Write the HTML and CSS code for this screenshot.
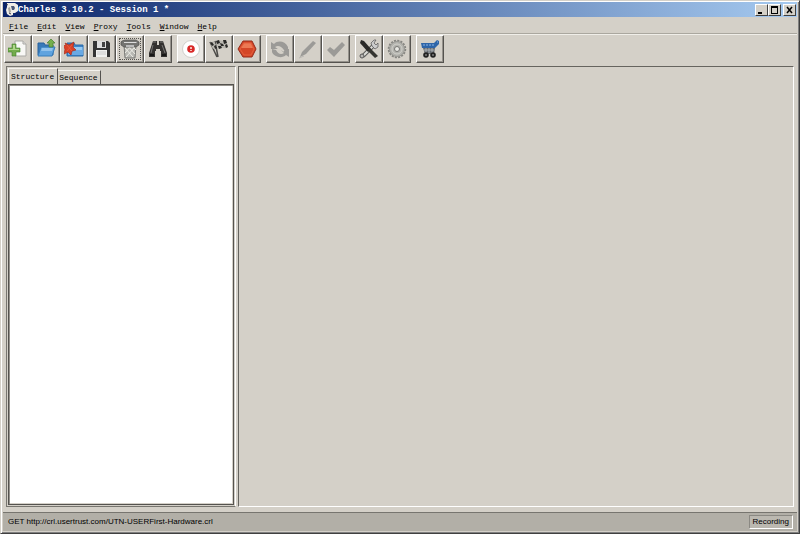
FILE: index.html
```
<!DOCTYPE html>
<html lang="en">
<head>
<meta charset="utf-8">
<title>Charles 3.10.2 - Session 1 *</title>
<link rel="stylesheet" href="styles.css">
</head>
<body>
<div class="window">
  <header class="titlebar">
    <svg class="logo" width="13" height="13" viewBox="0 0 13 13"><path d="M2 0h8l3 2v6l-3 2H8v2l-3 1-3-2-1-4 1-3z" fill="#efede7"/><path d="M6 3h3l1 2-1 2H7z" fill="#4a5878"/><path d="M3 5l2-1 1 5-2 1z" fill="#aaa9a2"/><path d="M1 1l2 1M4 10l2 1" stroke="#38384a"/></svg>
    <h1 class="title">Charles 3.10.2 - Session 1 *</h1>
    <div class="controls">
      <button class="control" aria-label="Minimize"><svg width="9" height="8" viewBox="0 0 9 8"><path d="M1 6h4v2H1z"/></svg></button>
      <button class="control" aria-label="Maximize"><svg width="9" height="8" viewBox="0 0 9 8"><path d="M1 0h7v8H1zM2 2v5h5V2z" fill-rule="evenodd"/></svg></button>
      <button class="control close" aria-label="Close"><svg width="9" height="8" viewBox="0 0 9 8"><path d="M2 1l5 6M7 1L2 7" stroke="#000" stroke-width="1.5"/></svg></button>
    </div>
  </header>
  <nav class="menubar">
    <button class="menu"><u>F</u>ile</button>
    <button class="menu"><u>E</u>dit</button>
    <button class="menu"><u>V</u>iew</button>
    <button class="menu"><u>P</u>roxy</button>
    <button class="menu"><u>T</u>ools</button>
    <button class="menu"><u>W</u>indow</button>
    <button class="menu"><u>H</u>elp</button>
  </nav>
  <div class="toolbar">
    <div class="group">
      <button class="tool" aria-label="New session"><svg class="icon" viewBox="0 0 20 20"><path d="M7 2h8l3 3v12H7z" fill="#f8f8f6" stroke="#aaa9a5"/><path d="M15 2v3h3" fill="#ddd" stroke="#aaa9a5"/><path d="M4 5h4v4h4v4H8v4H4v-4H0V9h4z" fill="#73ac4c" stroke="#42802c" stroke-width=".6"/><path d="M5 6h2v4H5zM1 10h10v1H1z" fill="#b0d68c"/></svg></button>
      <button class="tool" aria-label="Open"><svg class="icon" viewBox="0 0 20 20"><path d="M2 16V4h6l1 2h8v10z" fill="#3879b9" stroke="#28639d"/><path d="M5 8h14l-3 9H2z" fill="#5fa3df" stroke="#377cba"/><path d="M6 9h11l-1 3H5z" fill="#91c2ec"/><path d="M15 0l4 4h-2v4h-4V4h-2z" fill="#75af4d" stroke="#477c32" stroke-width=".7"/></svg></button>
      <button class="tool" aria-label="Close session"><svg class="icon" viewBox="0 0 20 20"><path d="M3 17V4h7l1 2h8v11z" fill="#3f83c7" stroke="#286ba8"/><path d="M4 8h15v8H4z" fill="#69a9e4"/><path d="M5 8h13v3H5z" fill="#97c9f0"/><path d="M1 4l4 2 5-3-1 5 3 3-4 1-1 4-3-3-4 2 1-5-2-3 3-1z" fill="#d94027" stroke="#a82c1d" stroke-width=".7"/><path d="M3 6l5 6M8 6l-5 6" stroke="#e85b3e"/></svg></button>
      <button class="tool" aria-label="Save"><svg class="icon" viewBox="0 0 20 20"><path d="M1 2h15l2 2v14H1z" fill="#343434"/><path d="M5 2h9v7H5z" fill="#dedede"/><path d="M10 3h3v5h-3z" fill="#424242"/><path d="M4 11h11v7H4z" fill="#f2f2f0"/><path d="M5 13h9M5 15h9" stroke="#ccc"/></svg></button>
      <button class="tool focused" aria-label="Clear"><svg class="icon" viewBox="0 0 20 20"><path d="M4 6h12l-1 13H5z" fill="#b8b8b3" stroke="#787875"/><path d="M5 9l8 9M8 7l7 8M12 7l4 4M15 8L6 18M11 7l-6 7" stroke="#eeeee7"/><path d="M2 2l3-1h11l3 2v3l-3 2H4L1 6V3z" fill="#747471" stroke="#50504f" stroke-width=".7"/><path d="M4 3h12l1 1H4z" fill="#ddd"/><path d="M6 6h8v2H6z" fill="#bbb"/></svg></button>
      <button class="tool" aria-label="Find"><svg class="icon" viewBox="0 0 20 20"><path d="M5 2h4v4h2V2h4l1 3 3 9v4h-6v-6h-1v-2H8v2H7v6H1v-4l3-9z" fill="#33312f"/><path d="M5 3h3M12 3h3M5 6L3 14M14 6l3 8" stroke="#777674"/><path d="M2 16h4M14 16h4" stroke="#171716" stroke-width="2"/></svg></button>
    </div>
    <div class="group">
      <button class="tool pressed" aria-label="Record"><svg class="icon" viewBox="0 0 20 20"><circle cx="10" cy="10" r="8.500" fill="#fff" stroke="#d0cfcb"/><circle cx="10" cy="10" r="3.800" fill="#d92928"/><path d="M9 8h2v2H9zM9 11h2v1H9z" fill="#f4bbb7"/></svg></button>
      <button class="tool" aria-label="Throttle"><svg class="icon" viewBox="0 0 20 20"><path d="M1 3l7 15M6 2l3 16" stroke="#4c4b48" stroke-width="1.500"/><path d="M1 4l4-2 3 6-4 2zM7 2c4-2 5 1 10-1l2 7c-4 3-6-1-10 2z" fill="#b9b7b0"/><path d="M1 4l2-1 2 3-2 1zM5 7l2-1 1 3-2 1zM7 2l3-1 1 3-3 1zM11 4l3 1 1 2-3 0zM14 1l3 0 1 3-3 1zM9 7l3 0 1 2-3 1zM16 6l2-1 1 3-2 1z" fill="#292927"/></svg></button>
      <button class="tool" aria-label="Breakpoints"><svg class="icon" viewBox="0 0 20 20"><path d="M6 2h9l4 8-4 8H6l-5-8z" fill="#d44627" stroke="#962b1a"/><path d="M7 4h7l2 5H4z" fill="#ec7954"/><path d="M7 4h7l3 6-3 6H7l-4-6z" fill="none" stroke="#e45f3d"/></svg></button>
    </div>
    <div class="group">
      <button class="tool" aria-label="Repeat" disabled><svg class="icon" viewBox="0 0 20 20"><path d="M1 10V3l3 2c4-4 11-3 14 3v4l-4-1c-3-4-6-5-9-3l3 2zM19 10v8l-3-2C12 20 4 18 2 13v-3l4 1c2 4 5 5 8 3l-3-3z" fill="#9b9a97"/><path d="M7 8l7 4" stroke="#d4d0c8" stroke-width="1.500"/></svg></button>
      <button class="tool" aria-label="Edit" disabled><svg class="icon" viewBox="0 0 20 20"><path d="M2 18l2-5L15 2l3 2L8 15z" fill="#9b9a97"/><path d="M1 19l5-2" stroke="#b9b7b2"/></svg></button>
      <button class="tool" aria-label="Validate" disabled><svg class="icon" viewBox="0 0 20 20"><path d="M1 11l3-3 4 3 8-8 3 3L8 18z" fill="#9b9a97"/></svg></button>
    </div>
    <div class="group">
      <button class="tool" aria-label="Tools"><svg class="icon" viewBox="0 0 20 20"><path d="M4 17L15 6" stroke="#5b5b58" stroke-width="4"/><path d="M4 17L15 6" stroke="#dcdcd8" stroke-width="2"/><path d="M13 7l-1-3 3-3 2 0-2 3 2 2 2-2 0 4-3 2z" fill="#ccc" stroke="#555" stroke-width=".7"/><path d="M2 1l3 1 7 8-3 3-8-9z" fill="#292927"/><path d="M11 9l8 8-3 2-7-7z" fill="#353531"/><circle cx="3" cy="17" r="2" fill="#b9b8b4" stroke="#555"/></svg></button>
      <button class="tool" aria-label="Settings"><svg class="icon" viewBox="0 0 20 20"><circle cx="10" cy="10" r="8" fill="none" stroke="#858581" stroke-width="2.500" stroke-dasharray="2 1.140"/><circle cx="10" cy="10" r="7.500" fill="#b3b3ae" stroke="#999994"/><circle cx="10" cy="10" r="5" fill="none" stroke="#d0d0ca"/><circle cx="10" cy="10" r="2.500" fill="#e8e8e3" stroke="#777774"/></svg></button>
    </div>
    <div class="group">
      <button class="tool" aria-label="Purchase"><svg class="icon" viewBox="0 0 20 20"><path d="M1 4h13l3-3 2 1v3l-4 4H2z" fill="#2e65a8"/><path d="M3 6h12M17 3h1" stroke="#88b4e6" stroke-dasharray="2 1"/><path d="M3 9h12l-1 6H5z" fill="#666b70"/><path d="M4 11h10M6 9v5M9 9v5M12 9v5" stroke="#c2c5c8" stroke-width=".7"/><circle cx="6" cy="16" r="2.800" fill="#222"/><circle cx="13" cy="16" r="2.800" fill="#222"/><path d="M5 16h2M12 16h2" stroke="#aaa"/></svg></button>
    </div>
  </div>
  <main class="workspace">
    <section class="sidebar">
      <div class="tabs" role="tablist">
        <button class="tab selected" role="tab" aria-selected="true">Structure</button>
        <button class="tab" role="tab" aria-selected="false">Sequence</button>
      </div>
      <div class="tree" role="tabpanel"></div>
    </section>
    <section class="detail"></section>
  </main>
  <footer class="statusbar">
    <span>GET http://crl.usertrust.com/UTN-USERFirst-Hardware.crl</span>
    <span class="recording">Recording</span>
  </footer>
</div>
</body>
</html>
```
FILE: styles.css
```
* { box-sizing: border-box; }

body { margin: 0; }

button {
  margin: 0;
  padding: 0;
  border: 0;
  background: none;
  color: #000;
  font: inherit;
}

.window {
  display: flex;
  flex-direction: column;
  height: 100vh;
  padding: 1px 2px 2px 2px;
  border: 1px solid;
  border-color: #d4d0c8 #404040 #404040 #d4d0c8;
  box-shadow: inset 1px 1px #fff, inset -1px -1px #808080;
  background: #d4d0c8;
  font: 8px/10px "Liberation Mono", monospace;
}

.titlebar {
  display: flex;
  align-items: center;
  height: 15px;
  padding: 0 1px 0 2px;
  background: linear-gradient(90deg, #0a246a, #a6caf0);
  color: #fff;
}

.title {
  flex: 1;
  margin: 0;
  font-size: 9px;
  line-height: 12px;
}

.controls { display: flex; }

.control {
  display: flex;
  align-items: center;
  justify-content: center;
  width: 13px;
  height: 12px;
  border: 1px solid;
  border-color: #fff #404040 #404040 #fff;
  background: #d4d0c8;
}

.close { margin-left: 2px; }

.menubar {
  display: flex;
  gap: 9px;
  height: 17px;
  padding: 3px 6px 0;
  border-bottom: 1px solid #aaa79f;
}

.toolbar {
  display: flex;
  gap: 5px;
  padding: 0 1px 3px;
  border-top: 1px solid #f0eee9;
}

.group { display: flex; }

.tool {
  display: flex;
  align-items: center;
  justify-content: center;
  width: 28px;
  height: 28px;
  border: 1px solid;
  border-color: #fff #55534f #55534f #fff;
  box-shadow: inset -1px -1px #96938d;
}

.pressed { background: #ebe9e5; }

.focused {
  outline: 1px dotted #55534f;
  outline-offset: -4px;
}

.icon {
  width: 20px;
  height: 20px;
}

.workspace {
  display: grid;
  grid-template-columns: 29fr 70fr;
  gap: 2px;
  flex: 1;
  min-height: 0;
  padding: 0 3px 5px;
}

.sidebar {
  display: flex;
  flex-direction: column;
  border: 1px solid;
  border-color: #77756f #fff #77756f #77756f;
}

.tabs {
  display: flex;
  align-items: flex-end;
  height: 17px;
  padding-left: 1px;
}

.tab {
  height: 14px;
  padding: 1px 2px 0 1px;
  border-top: 1px solid #f4f2ed;
  border-right: 1px solid #55534f;
}

.tab.selected {
  height: 16px;
  padding: 1px 3px 0 2px;
  border-left: 1px solid #fff;
}

.tree {
  flex: 1;
  margin: 0 1px 1px;
  border: 1px solid #55534f;
  box-shadow: inset 1px 1px #96938d, inset -1px -1px #d4d0c8;
  background: #fff;
}

.detail {
  border: 1px solid;
  border-color: #66645f #fff #fff #66645f;
}

.statusbar {
  display: flex;
  align-items: center;
  justify-content: space-between;
  height: 19px;
  padding: 0 4px 0 5px;
  border-top: 1px solid #77756f;
  background: #b2afa7;
  font-family: "Liberation Sans", sans-serif;
}

.recording {
  padding: 1px 3px;
  border: 1px solid;
  border-color: #8b8983 #fff #fff #8b8983;
  background: #bbb8b0;
}
```
